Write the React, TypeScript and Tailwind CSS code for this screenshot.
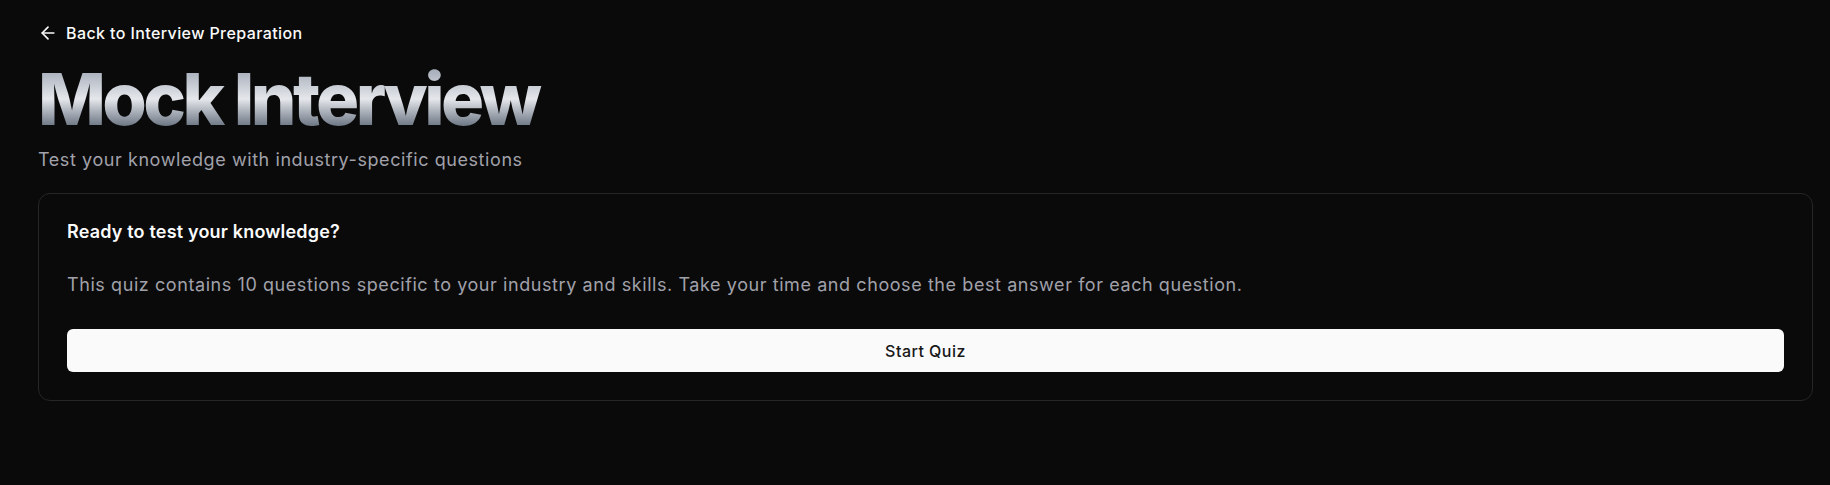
import { ArrowLeft } from "lucide-react";

export default function App() {
  return (
    <div className="min-h-screen bg-[#0a0a0a] pl-[38px] pr-[17px] pt-[21px] font-['Inter',sans-serif] tracking-[0.03em] text-[#fafafa]">
      <a href="#" className="flex items-center gap-2 text-base font-medium leading-6 tracking-[0.025em] text-[#fafafa]">
        <ArrowLeft className="h-5 w-5" />
        Back to Interview Preparation
      </a>

      <div className="mt-[18px]">
        <h1 className="bg-linear-to-b from-gray-400 via-gray-200 to-gray-600 bg-clip-text text-7xl leading-none font-extrabold tracking-tighter text-transparent">
          Mock Interview
        </h1>
        <p className="mt-[11px] text-lg leading-7 tracking-[0.032em] text-[#a1a1aa]">
          Test your knowledge with industry-specific questions
        </p>
      </div>

      {/* Quiz intro card */}
      <div className="mt-[19px] rounded-xl border border-[#262626] bg-[#0a0a0a] px-7 pt-[29px] pb-7">
        <h3 className="text-lg leading-none font-semibold tracking-[0.01em]">Ready to test your knowledge?</h3>
        <p className="mt-[30px] text-lg leading-7 tracking-[0.032em] text-[#a1a1aa]">
          This quiz contains 10 questions specific to your industry and skills. Take your time and choose the best
          answer for each question.
        </p>
        <button className="mt-[30px] flex h-[43px] w-full items-center justify-center rounded-md bg-[#fafafa] text-base font-medium text-[#171717]">
          Start Quiz
        </button>
      </div>
    </div>
  );
}
